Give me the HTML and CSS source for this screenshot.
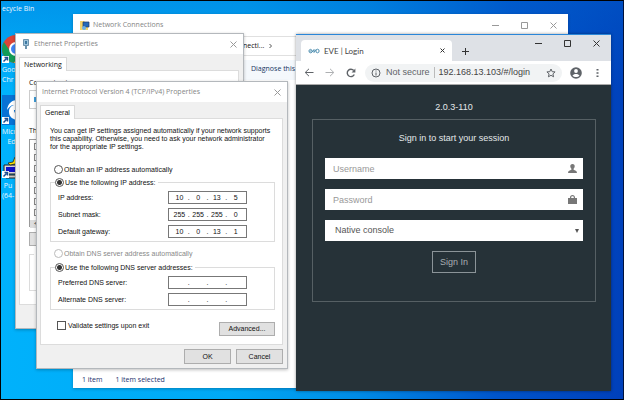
FILE: index.html
```html
<!DOCTYPE html>
<html lang="en">
<head>
<meta charset="utf-8">
<title>Desktop</title>
<link rel="stylesheet" href="styles.css">
</head>
<body>
<main class="desktop">
  <nav class="shortcuts">
    <a class="shortcut bin" href="#">ecycle Bin</a>
    <a class="shortcut" href="#">
      <svg class="pic" width="28" height="28" viewBox="0 0 28 28"><circle cx="14" cy="14" r="14" fill="#db4437"/><path d="M1.900 7A14 14 0 0 0 12 27.800L18 18 8 16z" fill="#139c57"/><path d="M12 28A14 14 0 0 0 26 7H14l5 9z" fill="#ffcd40"/><circle cx="14" cy="14" r="7" fill="#fff"/><circle cx="14" cy="14" r="5" fill="#4285f4"/><path d="M0 21h7v7H0z" fill="#fff"/><path d="M1.500 26.500l3-3M2.500 22.500h3v3" stroke="#1d4f91" stroke-width="1.500" fill="none"/></svg>
      <span>Goo<br>Chr</span>
    </a>
    <a class="shortcut" href="#">
      <svg class="pic" width="30" height="30" viewBox="0 0 30 30"><path d="M0 0h30v30H0z" fill="#0872d4"/><path d="M5 15C6 8 10 5 16 5c6 0 9 4 9 10H12c0 5 6 6 12 3v5c-7 4-17 2-17-6 0-4 2-6 5-7-3 0-5 2-7 5z" fill="#fff"/><path d="M0 22h7v7H0z" fill="#fff"/><path d="M1.500 27.500l3-3M2.500 23.500h3v3" stroke="#1d4f91" stroke-width="1.500" fill="none"/></svg>
      <span>Micr<br>&nbsp; &nbsp;Ed</span>
    </a>
    <a class="shortcut" href="#">
      <svg class="pic" width="28" height="22" viewBox="0 0 28 22"><path d="M2 8h12v9H2z" fill="#d8d8d8" stroke="#222"/><path d="M4 10h9v5H4z" fill="#1010c8"/><path d="M6 6l5-1 2-5 3 2v6l-3-1-5 1z" fill="#ffe600" stroke="#222" stroke-width=".8"/><path d="M4 18h12v3H4z" fill="#ccc" stroke="#222"/><path d="M0 14h7v7H0z" fill="#fff"/><path d="M1.500 19.500l3-3M2.500 15.500h3v3" stroke="#1d4f91" stroke-width="1.500" fill="none"/></svg>
      <span>&nbsp;Pu<br>(64-</span>
    </a>
  </nav>

  <section class="window network">
    <header class="titlebar">
      <svg width="11" height="11" viewBox="0 0 11 11"><path d="M1 1h4l1 1h3v8H1z" fill="#f3d36b"/><path d="M4 2h6v5H4z" fill="#2468b8" stroke="#223a66" stroke-width=".7"/><circle cx="5" cy="8" r="2" fill="#6ab0e8"/></svg>
      <h2>Network Connections</h2>
      <div class="controls">
        <button type="button" aria-label="Minimize"><svg width="7" height="7"><path d="M0 3.500h7"/></svg></button>
        <button type="button" aria-label="Maximize"><svg width="7" height="7"><path d="M.5.5h6v6h-6z"/></svg></button>
        <button type="button" aria-label="Close"><svg width="7" height="7"><path d="M.5.5l6 6M6.500.5l-6 6"/></svg></button>
      </div>
    </header>
    <div class="pathbar">necti... <svg width="4" height="6"><path d="M.5 1L2.500 3 .5 5"/></svg></div>
    <div class="commands"><button type="button">Diagnose this</button></div>
    <footer class="status"><span>1 item</span><span>1 item selected</span></footer>
  </section>

  <section class="window ethernet">
    <header class="titlebar">
      <svg width="7" height="11" viewBox="0 0 7 11"><path d="M.5.5h5v6h-5z" fill="#9fc4dc" stroke="#6d93ad"/><path d="M2 2h2v3H2z" fill="#3c78a0"/><path d="M2 7h2v3H2z" fill="#6d93ad"/></svg>
      <h2>Ethernet Properties</h2>
      <div class="controls"><button type="button" aria-label="Close"><svg width="7" height="7"><path d="M.5.5l6 6M6.500.5l-6 6"/></svg></button></div>
    </header>
    <div class="sheet">
      <button class="tab" type="button">Networking</button>
      <div class="panel">
        <p>Connect using:</p>
        <div class="adapter"><svg width="9" height="9" viewBox="0 0 9 9"><path d="M0 2h7v5H0z" fill="#3d9cd8"/><path d="M3 5h6v3H3z" fill="#4fae62"/></svg></div>
        <p>This</p>
        <div class="items">
          <input type="checkbox" checked aria-label="Item 1"><input type="checkbox" checked aria-label="Item 2"><input type="checkbox" checked aria-label="Item 3"><input type="checkbox" checked aria-label="Item 4"><input type="checkbox" aria-label="Item 5"><input type="checkbox" checked aria-label="Item 6"><input type="checkbox" checked aria-label="Item 7">
          <div class="scroll">&lt;</div>
        </div>
        <button class="push" type="button" aria-label="Install"></button>
        <fieldset><legend>D</legend></fieldset>
      </div>
    </div>
  </section>

  <section class="window ipv4">
    <header class="titlebar">
      <h2>Internet Protocol Version 4 (TCP/IPv4) Properties</h2>
      <div class="controls"><button type="button" aria-label="Close"><svg width="7" height="7"><path d="M.5.5l6 6M6.500.5l-6 6"/></svg></button></div>
    </header>
    <form class="sheet">
      <button class="tab" type="button">General</button>
      <div class="panel">
        <p>You can get IP settings assigned automatically if your network supports<br>this capability. Otherwise, you need to ask your network administrator<br>for the appropriate IP settings.</p>
        <label class="choice"><input type="radio" name="ip">Obtain an IP address automatically</label>
        <fieldset>
          <legend><label class="choice"><input type="radio" name="ip" checked>Use the following IP address:</label></legend>
          <div class="row"><label for="ip1">IP address:</label><div class="octets"><input id="ip1" value="10">.<input aria-label="IP 2" value="0">.<input aria-label="IP 3" value="13">.<input aria-label="IP 4" value="5"></div></div>
          <div class="row"><label for="sm1">Subnet mask:</label><div class="octets"><input id="sm1" value="255">.<input aria-label="Mask 2" value="255">.<input aria-label="Mask 3" value="255">.<input aria-label="Mask 4" value="0"></div></div>
          <div class="row"><label for="gw1">Default gateway:</label><div class="octets"><input id="gw1" value="10">.<input aria-label="Gateway 2" value="0">.<input aria-label="Gateway 3" value="13">.<input aria-label="Gateway 4" value="1"></div></div>
        </fieldset>
        <label class="choice off"><input type="radio" name="dns-auto" disabled>Obtain DNS server address automatically</label>
        <fieldset>
          <legend><label class="choice"><input type="radio" name="dns" checked>Use the following DNS server addresses:</label></legend>
          <div class="row"><label for="pd1">Preferred DNS server:</label><div class="octets"><input id="pd1">.<input aria-label="Preferred 2">.<input aria-label="Preferred 3">.<input aria-label="Preferred 4"></div></div>
          <div class="row"><label for="ad1">Alternate DNS server:</label><div class="octets"><input id="ad1">.<input aria-label="Alternate 2">.<input aria-label="Alternate 3">.<input aria-label="Alternate 4"></div></div>
        </fieldset>
        <div class="extras">
          <label class="choice"><input type="checkbox">Validate settings upon exit</label>
          <button class="push" type="button">Advanced...</button>
        </div>
      </div>
      <div class="actions"><button class="push" type="button">OK</button><button class="push" type="button">Cancel</button></div>
    </form>
  </section>

  <section class="browser">
    <header class="tabstrip">
      <div class="page-tab">
        <svg class="logo" width="12" height="6" viewBox="0 0 12 6"><path d="M1.500 3h2.500C4 .8 1 .8 1 3s2 2.200 3 1.200L6 1.500v3l2-3"/><ellipse cx="9.500" cy="3" rx="1.600" ry="1.800"/></svg>
        <span>EVE | Login</span>
        <button type="button" aria-label="Close tab"><svg width="5" height="5"><path d="M.5.5l4 4M4.500.5l-4 4"/></svg></button>
      </div>
      <button class="new-tab" type="button" aria-label="New tab"><svg width="7" height="7"><path d="M3.500 0v7M0 3.500h7"/></svg></button>
      <div class="controls">
        <button type="button" aria-label="Minimize"><svg width="7" height="7"><path d="M0 3.500h7"/></svg></button>
        <button type="button" aria-label="Maximize"><svg width="7" height="7"><path d="M.5.5h6v6h-6z"/></svg></button>
        <button type="button" aria-label="Close"><svg width="7" height="7"><path d="M.5.5l6 6M6.500.5l-6 6"/></svg></button>
      </div>
    </header>
    <div class="toolbar">
      <button type="button" aria-label="Back"><svg width="10" height="9" viewBox="0 0 10 9"><path d="M9.500 4.500h-8M5 .8L1.200 4.500 5 8.200"/></svg></button>
      <button class="dim" type="button" aria-label="Forward"><svg width="10" height="9" viewBox="0 0 10 9"><path d="M.5 4.500h8M5 .8l3.800 3.700L5 8.200"/></svg></button>
      <button type="button" aria-label="Reload"><svg width="10" height="10" viewBox="0 0 10 10"><path d="M8.300 6.500A3.700 3.700 0 1 1 7.800 2.500" stroke-width="1.400"/><path d="M9.400.6v3.800H5.600z" fill="#5f6368" stroke="none"/></svg></button>
      <div class="address">
        <svg width="10" height="10" viewBox="0 0 10 10"><circle cx="5" cy="5" r="4"/><path d="M5 4.500v3M5 2.500v1"/></svg>
        <span class="security">Not secure</span>
        <input aria-label="Address" value="192.168.13.103/#/login">
        <svg width="10" height="10" viewBox="0 0 10 10"><path d="M5 1l1.200 2.700 2.900.2-2.200 2 .7 2.900L5 7.300 2.400 8.800l.7-2.900-2.200-2 2.900-.2z"/></svg>
      </div>
      <button type="button" aria-label="Profile"><svg width="12" height="12" viewBox="0 0 12 12"><circle cx="6" cy="6" r="5.800" fill="#5f6368" stroke="none"/><circle cx="6" cy="4" r="1.900" fill="#fff" stroke="none"/><path d="M2.500 8.600C3.500 6.400 8.500 6.400 9.500 8.600 8 10.600 4 10.600 2.500 8.600z" fill="#fff" stroke="none"/></svg></button>
      <button class="menu" type="button" aria-label="Menu"><svg width="3" height="10"><path d="M.5 1h2v1.500h-2zM.5 4.300h2v1.500h-2zM.5 7.500h2V9h-2z" fill="#5f6368" stroke="none"/></svg></button>
    </div>
    <div class="page">
      <p>2.0.3-110</p>
      <form class="login">
        <p>Sign in to start your session</p>
        <div class="field"><input aria-label="Username" placeholder="Username"><svg width="9" height="9" viewBox="0 0 9 9"><path d="M4.500 0C6 0 6.900 1 6.700 2.600 6.600 3.600 6.100 4.400 5.600 4.800v1C7 6.300 9 6.800 9 9H0c0-2.200 2-2.700 3.400-3.200v-1C2.900 4.400 2.400 3.600 2.300 2.600 2.100 1 3 0 4.500 0z"/></svg></div>
        <div class="field"><input type="password" aria-label="Password" placeholder="Password"><svg width="9" height="9" viewBox="0 0 9 9"><path d="M0 3h2V2.500C2 .9 3 0 4.500 0S7 .9 7 2.500V3h2v6H0zm3.200 0h2.600V2.500c0-.8-.5-1.300-1.300-1.300s-1.300.5-1.300 1.300z"/></svg></div>
        <div class="field"><select aria-label="Console"><option>Native console</option></select><svg class="arrow" width="4" height="4"><path d="M0 0h4L2 4z"/></svg></div>
        <button type="button">Sign In</button>
      </form>
    </div>
  </section>
</main>
</body>
</html>
```
FILE: styles.css
```css
* { box-sizing: border-box; }
body { margin: 0; font: 7px/10px "Open Sans", "Noto Sans", sans-serif; color: #111; background: #000; }
button { font: inherit; color: inherit; padding: 0; border: 0; background: none; }
input, select { font: inherit; color: inherit; margin: 0; }
p, h2 { margin: 0; font-size: inherit; font-weight: normal; white-space: nowrap; }
svg { display: block; flex: none; }
a { color: inherit; text-decoration: none; }

.desktop {
  position: relative;
  min-height: 100vh;
  overflow: hidden;
  border: 1px solid #000;
  border-right-color: #00123c;
  background:
    linear-gradient(180deg, rgba(0, 100, 205, .35), transparent 22%),
    linear-gradient(92deg, #00b2fc 0%, #00a9f5 38%, #008ce6 58%, #0055cb 80%, #0040ba 100%);
}

.shortcuts { display: flex; flex-direction: column; width: 60px; color: #e8f6ff; }
.shortcut { display: block; padding-left: 1px; }
.shortcut span { display: block; line-height: 10px; }
.shortcut .pic { margin-bottom: 2px; }
.bin { padding: 3px 0 21px 1px; }
.shortcut + .shortcut + .shortcut { padding-top: 10px; }

.window { position: absolute; display: flex; flex-direction: column; background: #f0f0f0; border: 1px solid #b4b8bc; box-shadow: 0 1px 3px rgba(0, 0, 0, .25); }
.titlebar { display: flex; align-items: center; gap: 5px; height: 20px; padding: 0 6px 0 5px; background: #fff; color: #858585; }
.controls { display: flex; margin-left: auto; gap: 22px; }
.window .controls svg { fill: none; stroke: #999; }

.network { left: 72px; right: 55px; top: 13px; bottom: 11px; background: #fff; border-color: #fff; }
.network .titlebar { padding-right: 10px; gap: 3px; }
.pathbar { display: flex; align-items: center; gap: 5px; height: 20px; margin-top: 1px; padding-left: 169px; border: solid #e0e0e0; border-width: 1px 0; }
.pathbar svg { fill: none; stroke: #555; }
.commands { margin-top: 4px; padding: 4px 0 6px 177px; background: #f4f8fc; color: #16355f; white-space: nowrap; }
.status { display: flex; gap: 13px; margin-top: auto; padding: 0 8px 2px; color: #24316e; }

.ethernet { left: 14px; top: 32px; width: 229px; height: 296px; }
.ethernet .titlebar { gap: 4px; padding-left: 7px; }
.sheet { display: flex; flex-direction: column; align-items: flex-start; padding: 3px 4px 4px 3px; }
.tab { position: relative; z-index: 1; height: 14px; margin-bottom: -1px; padding: 0 4px; border: 1px solid #d9d9d9; border-bottom: 0; background: #fff; }
.panel { align-self: stretch; border: 1px solid #dcdcdc; background: #fff; }
.ethernet .panel { display: flex; flex-direction: column; align-items: flex-start; height: 235px; padding: 7px 9px; }
.adapter { align-self: stretch; height: 19px; margin: 2px 0 17px; padding: 4px; border: 1px solid #ccc; }
.items { display: flex; flex-direction: column; align-self: stretch; gap: 4px; height: 88px; margin-top: 3px; padding: 3px 4px 0; border: 1px solid #999; }
.items input { appearance: none; width: 7px; height: 7px; border: 1px solid #888; flex: none; }
.items input:checked { background: linear-gradient(#444, #444) center / 3px 2px no-repeat; }
.scroll { margin: 0 -4px; background: #ddd; line-height: 8px; padding-left: 4px; }
.push { border: 1px solid #adadad; background: #e1e1e1; }
.ethernet .push { width: 50px; height: 14px; margin: 5px 0 3px; }
fieldset { margin: 0; padding: 0; border: 1px solid #dcdcdc; min-width: 0; }
.ethernet fieldset { align-self: stretch; height: 42px; }
.ethernet legend { margin-left: 4px; }

.ipv4 { left: 35px; top: 80px; width: 252px; }
.sheet .tab { font-size: 7px; }
.ipv4 .sheet { font: 7px/8px "Liberation Sans", sans-serif; }
.ipv4 .panel { padding: 8px 7px 8px 9px; }
.choice { display: flex; align-items: center; gap: 1px; height: 9px; }
.choice input { appearance: none; flex: none; width: 9px; height: 9px; border: 1px solid #555; background: #fff; }
.choice input[type="radio"] { border-radius: 50%; }
.choice input[type="radio"]:checked { background: radial-gradient(circle, #333 0 2px, #fff 3px); }
.ipv4 .panel > .choice { margin: 14px 0 4px 4px; }
.ipv4 .panel > .off { margin-top: 7px; margin-bottom: 5px; color: #888; }
.off input { border-color: #bbb; }
.ipv4 fieldset { padding: 4px 27px 3px 7px; }
.ipv4 legend { padding: 0 2px 0 0; margin-left: -3px; }
.row { display: flex; justify-content: space-between; align-items: center; }
.row + .row { margin-top: 4px; }
.octets { display: flex; align-items: center; width: 79px; height: 13px; padding: 0 2px; border: 1px solid #777; background: #fff; }
.octets input { flex: 1; width: 0; height: 11px; padding: 0; border: 0; background: none; text-align: center; outline: 0; }
.extras { display: flex; justify-content: space-between; align-items: center; margin-top: 11px; }
.extras .choice { margin: 0 0 6px 7px; gap: 2px; }
.extras .push { width: 56px; height: 14px; }
.actions { display: flex; align-self: flex-end; gap: 5px; margin-top: 4px; }
.actions .push { width: 47px; height: 15px; }

.browser { position: absolute; left: 295px; right: 12px; top: 33px; bottom: 8px; display: flex; flex-direction: column; border-top: 1px solid #2a86d8; background: #263238; box-shadow: 0 0 3px rgba(0, 0, 0, .4); }
.browser svg { fill: none; stroke: #5f6368; }
.browser .logo { stroke: #4f8fb0; }
.tabstrip { display: flex; align-items: flex-end; height: 26px; padding-left: 5px; background: #dee1e6; }
.page-tab { display: flex; align-items: center; gap: 4px; width: 151px; height: 21px; padding: 0 7px; border-radius: 4px 4px 0 0; background: #fff; color: #444; font: 8px/10px Lato, sans-serif; }
.page-tab button { margin-left: auto; }
.new-tab { margin: 0 0 6px 10px; }
.new-tab svg, .tabstrip .controls svg, .page-tab button svg { stroke: #333; }
.tabstrip .controls { align-self: flex-start; padding: 5px 11px 0 0; }
.toolbar { display: flex; align-items: center; gap: 11px; height: 24px; padding: 0 8px; border-bottom: 1px solid #aaa; background: #fff; }
.toolbar .dim { opacity: .5; }
.address { display: flex; flex: 1; align-items: center; min-width: 0; height: 18px; margin-left: -2px; padding: 0 6px; border-radius: 9px; background: #f1f3f4; font: 9px/11px "Liberation Sans", sans-serif; color: #444; }
.security { padding: 0 4px 0 5px; margin-right: 4px; border-right: 1px solid #bbb; color: #5f6368; white-space: nowrap; }
.address input { flex: 1; width: 0; padding: 0; border: 0; background: none; outline: 0; }
.address + button { margin-left: -3px; }
.menu { margin: 0 4px 0 3px; }

.page { flex: 1; padding: 17px 15px 0 16px; color: #e4e8ea; font: 9px/11px "Liberation Sans", sans-serif; text-align: center; }
.login { display: flex; flex-direction: column; align-items: center; gap: 10px; margin-top: 6px; padding: 13px 12px 28px; border: 1px solid #566064; }
.login p { margin-bottom: 4px; }
.field { display: flex; align-items: center; align-self: stretch; height: 21px; padding-right: 6px; background: #fff; color: #555; }
.field input, .field select { flex: 1; min-width: 0; height: 21px; padding: 0 8px; border: 0; background: none; outline: 0; appearance: none; }
.field select { padding-left: 10px; }
.field input::placeholder { color: #999; opacity: 1; }
.browser .field svg { fill: #777; stroke: none; }
.browser .field .arrow { margin-right: -2px; fill: #555; }
.login button { width: 44px; height: 22px; border: 1px solid #8b9498; color: #a8afb2; }
```
